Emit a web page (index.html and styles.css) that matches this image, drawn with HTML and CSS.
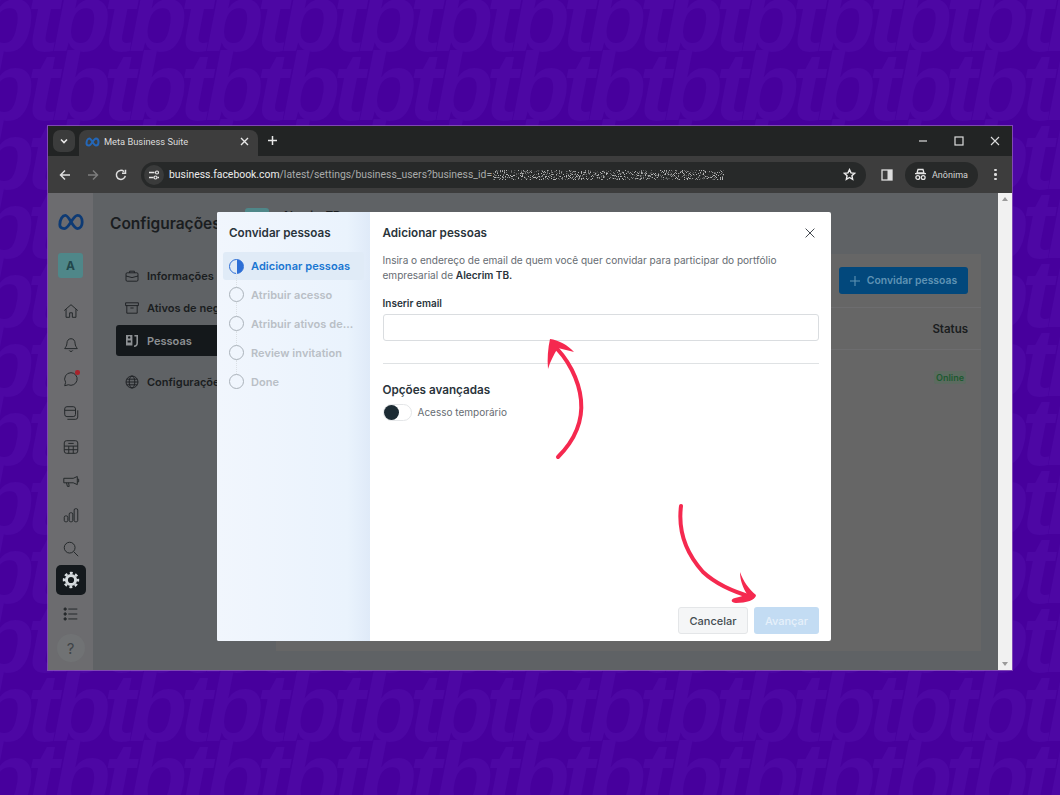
FILE: index.html
```html
<!DOCTYPE html>
<html lang="pt-BR">
<head>
<meta charset="utf-8">
<title>Meta Business Suite</title>
<link rel="stylesheet" href="styles.css">
</head>
<body>
<div class="pattern" aria-hidden="true">
  <div class="pattern-row">tbtbtbtbtbtbtbtbtbtbtbtbtbtbtb</div>
  <div class="pattern-row">tbtbtbtbtbtbtbtbtbtbtbtbtbtbtb</div>
  <div class="pattern-row">tbtbtbtbtbtbtbtbtbtbtbtbtbtbtb</div>
  <div class="pattern-row">tbtbtbtbtbtbtbtbtbtbtbtbtbtbtb</div>
  <div class="pattern-row">tbtbtbtbtbtbtbtbtbtbtbtbtbtbtb</div>
  <div class="pattern-row">tbtbtbtbtbtbtbtbtbtbtbtbtbtbtb</div>
  <div class="pattern-row">tbtbtbtbtbtbtbtbtbtbtbtbtbtbtb</div>
  <div class="pattern-row">tbtbtbtbtbtbtbtbtbtbtbtbtbtbtb</div>
  <div class="pattern-row">tbtbtbtbtbtbtbtbtbtbtbtbtbtbtb</div>
  <div class="pattern-row">tbtbtbtbtbtbtbtbtbtbtbtbtbtbtb</div>
  <div class="pattern-row">tbtbtbtbtbtbtbtbtbtbtbtbtbtbtb</div>
  <div class="pattern-row">tbtbtbtbtbtbtbtbtbtbtbtbtbtbtb</div>
</div>

<div class="window">
  <div class="tabstrip">
    <div class="tab-search"><svg width="10" height="10" viewBox="0 0 10 10"><path d="M2 3.500 5 6.500 8 3.500" fill="none" stroke="#e8e8e8" stroke-width="1.600"/></svg></div>
    <div class="tab">
      <svg class="tab-meta" width="15" height="10" viewBox="0 0 30 18"><path d="M3 12C3 6 6 2 9 2c4 0 8 14 13 14 3 0 5-3 5-7s-2-7-5-7c-5 0-9 14-14 14-3 0-5-1-5-4z" fill="none" stroke="#2467b8" stroke-width="4"/></svg>
      <span class="tab-title">Meta Business Suite</span>
      <svg class="tab-x" width="9" height="9" viewBox="0 0 9 9"><path d="M1 1 8 8M8 1 1 8" stroke="#e8e8e8" stroke-width="1.400"/></svg>
    </div>
    <svg class="newtab" width="11" height="11" viewBox="0 0 11 11"><path d="M5.500 1v9M1 5.500h9" stroke="#e8e8e8" stroke-width="1.500"/></svg>
    <div class="win-controls">
      <svg width="10" height="10" viewBox="0 0 10 10"><path d="M1 5h8" stroke="#ddd" stroke-width="1.200"/></svg>
      <svg width="10" height="10" viewBox="0 0 10 10"><rect x="1" y="1" width="8" height="8" fill="none" stroke="#ddd" stroke-width="1.200"/></svg>
      <svg width="10" height="10" viewBox="0 0 10 10"><path d="M1 1 9 9M9 1 1 9" stroke="#ddd" stroke-width="1.100"/></svg>
    </div>
  </div>
  <div class="toolbar">
    <svg class="nav" width="12" height="12" viewBox="0 0 12 12"><path d="M11 6H2M6 1.500 1.500 6 6 10.500" fill="none" stroke="#dedede" stroke-width="1.500"/></svg>
    <svg class="nav" width="12" height="12" viewBox="0 0 12 12"><path d="M1 6h9M6 1.500 10.500 6 6 10.500" fill="none" stroke="#7d7d7d" stroke-width="1.500"/></svg>
    <svg class="nav" width="12" height="12" viewBox="0 0 12 12"><path d="M10.300 6.800A4.500 4.500 0 1 1 9 2.600M10.500 .8v3.400H7" fill="none" stroke="#dedede" stroke-width="1.500"/></svg>
    <div class="omnibox">
      <div class="site-info"><svg width="12" height="10" viewBox="0 0 12 10"><path d="M1 2.500h5.500M9.500 7.500H11M1 7.500h4.500" stroke="#e6e6e6" stroke-width="1.300"/><circle cx="9" cy="2.500" r="1.500" fill="none" stroke="#e6e6e6" stroke-width="1.200"/><circle cx="7.500" cy="7.500" r="1.500" fill="none" stroke="#e6e6e6" stroke-width="1.200"/></svg></div>
      <span class="url"><span class="url-host">business.facebook.com</span>/latest/settings/business_users?business_id=</span>
      <svg class="url-noise" width="231" height="14" viewBox="0 0 231 14"><defs><filter id="speck" x="0" y="0" width="100%" height="100%"><feTurbulence type="fractalNoise" baseFrequency="0.95" numOctaves="2" seed="4"/><feColorMatrix values="0 0 0 0 .78 0 0 0 0 .78 0 0 0 0 .78 0 0 0 7 -3.800"/></filter></defs><rect x="0" y="2" width="231" height="10" filter="url(#speck)"/></svg>
      <svg class="star" width="13" height="13" viewBox="0 0 24 24"><path d="M12 3l2.800 6 6.500.8-4.800 4.500 1.300 6.500L12 17.500 6.200 20.800l1.300-6.500L2.700 9.800 9.200 9z" fill="none" stroke="#eee" stroke-width="2.600"/></svg>
    </div>
    <svg class="panel-ic" width="12" height="12" viewBox="0 0 12 12"><rect x="1" y="1" width="10" height="10" fill="none" stroke="#ddd" stroke-width="1.300"/><rect x="6.500" y="1" width="4.500" height="10" fill="#ddd"/></svg>
    <div class="incognito">
      <svg width="13" height="13" viewBox="0 0 13 13"><path d="M4 1.500h5l1 3.500H3zM1 5.600h11" fill="none" stroke="#e6e6e6" stroke-width="1.300"/><circle cx="3.800" cy="9.500" r="1.900" fill="none" stroke="#e6e6e6" stroke-width="1.300"/><circle cx="9.200" cy="9.500" r="1.900" fill="none" stroke="#e6e6e6" stroke-width="1.300"/></svg>
      <span>Anônima</span>
    </div>
    <div class="kebab"><i></i><i></i><i></i></div>
  </div>

  <div class="viewport">
    <aside class="rail">
      <svg class="rail-logo" width="28" height="18" viewBox="0 0 30 18"><path d="M3 12C3 6 6 2 9 2c4 0 8 14 13 14 3 0 5-3 5-7s-2-7-5-7c-5 0-9 14-14 14-3 0-5-1-5-4z" fill="none" stroke="#0d3a74" stroke-width="3"/></svg>
      <div class="avatar">A</div>
      <svg class="rail-ic" viewBox="0 0 20 20"><path d="M2.500 9.500 10 3l7.500 6.500M4.500 8v9h4v-5h3v5h4V8"/></svg>
      <svg class="rail-ic" viewBox="0 0 20 20"><path d="M10 3c-3 0-4.500 2.500-4.500 5 0 3-2 5-2.500 6h14c-.5-1-2.500-3-2.500-6 0-2.500-1.500-5-4.500-5zM8 16c.5 1.500 3.500 1.500 4 0"/></svg>
      <div class="rail-chat">
        <svg class="rail-ic" viewBox="0 0 20 20"><path d="M10 3a7 7 0 1 1-3 13.400L3 17.500l1-3.800A7 7 0 0 1 10 3z"/></svg>
        <span class="dot"></span>
      </div>
      <svg class="rail-ic" viewBox="0 0 20 20"><rect x="3" y="3" width="12" height="11" rx="2.500"/><path d="M3 7h12M6 17h9a2.500 2.500 0 0 0 2.500-2.500V7"/></svg>
      <svg class="rail-ic" viewBox="0 0 20 20"><rect x="2.500" y="3" width="15" height="14" rx="2.500"/><path d="M2.500 9h15M2.500 13h15M7.500 9v8M12.500 9v8M7 6h6"/></svg>
      <svg class="rail-ic" viewBox="0 0 20 20"><path d="M2 7h10.500l4.500-2v9l-4.500-2H2zM5 12l1 4h2l-.7-4"/><path d="M17 8h1.500v3H17"/></svg>
      <svg class="rail-ic" viewBox="0 0 20 20"><rect x="2.500" y="11" width="4" height="6.500" rx="1.500"/><rect x="8" y="7.500" width="4" height="10" rx="1.500"/><rect x="13.500" y="3" width="4" height="14.500" rx="1.500"/></svg>
      <svg class="rail-ic" viewBox="0 0 20 20"><circle cx="8.500" cy="8.500" r="6"/><path d="M13 13l5 5"/></svg>
      <div class="rail-gear">
        <svg width="18" height="18" viewBox="0 0 18 18"><circle cx="9" cy="9" r="4.600" fill="none" stroke="#d5dadd" stroke-width="3"/><circle cx="9" cy="9" r="7" fill="none" stroke="#d5dadd" stroke-width="2.400" stroke-dasharray="2.900 2.600" stroke-dashoffset="1.400"/></svg>
      </div>
      <svg class="rail-ic" viewBox="0 0 20 20"><path d="M7 4.500h10M7 10h10M7 15.500h10"/><circle cx="3.500" cy="4.500" r="1.300" fill="#24282b"/><circle cx="3.500" cy="10" r="1.300" fill="#24282b"/><circle cx="3.500" cy="15.500" r="1.300" fill="#24282b"/></svg>
      <div class="rail-help">?</div>
    </aside>

    <main class="page">
      <div class="settings-col">
        <h1 class="settings-title">Configurações</h1>
        <nav class="settings-nav">
          <div class="nav-row"><svg class="nav-ic" viewBox="0 0 20 20"><rect x="2.500" y="6" width="15" height="10.500" rx="1.500"/><path d="M7 6V4h6v2M2.500 10l7.500 2 7.500-2"/></svg><span>Informações</span></div>
          <div class="nav-row"><svg class="nav-ic" viewBox="0 0 20 20"><path d="M2 3.500h16v3.500H2zM3.500 7v9.500h13V7M8 10h4"/></svg><span>Ativos de negócios</span></div>
          <div class="nav-row active"><svg class="nav-ic" viewBox="0 0 20 20"><path fill="currentColor" stroke="none" fill-rule="evenodd" d="M2.500 2.500h8v13h-8zM5 5.500a1.500 1.500 0 1 0 3 0 1.500 1.500 0 0 0-3 0zM4.500 12h4V9.500h-4zM13 2.500h4.500v10c0 3-2 5-5 5v-2c2 0 3-1 3-3v-8H13z"/></svg><span>Pessoas</span></div>
          <div class="nav-row spaced"><svg class="nav-ic" viewBox="0 0 20 20"><circle cx="10" cy="10" r="7.500"/><ellipse cx="10" cy="10" rx="3.500" ry="7.500"/><path d="M2.500 10h15M3.500 6.500h13M3.500 13.500h13"/></svg><span>Configurações</span></div>
        </nav>
      </div>
      <div class="biz-chip"><span class="biz-logo"></span><span class="biz-name">Alecrim TB</span></div>
      <section class="content">
        <div class="content-head"><button class="invite-btn"><svg width="10" height="10" viewBox="0 0 10 10"><path d="M5 0v10M0 5h10" stroke="#5f93b4" stroke-width="1.100"/></svg>Convidar pessoas</button></div>
        <div class="content-cols"><span>Status</span></div>
        <div class="content-row"><span class="online">Online</span></div>
      </section>
    </main>
    <div class="scrollbar">
      <span class="sb-up"></span>
      <span class="sb-down"></span>
    </div>
    <div class="modal">
      <div class="stepper">
        <h2 class="stepper-title">Convidar pessoas</h2>
        <ol class="steps">
          <li class="step current"><span class="half"></span>Adicionar pessoas</li>
          <li class="step"><span class="ring"></span>Atribuir acesso</li>
          <li class="step"><span class="ring"></span>Atribuir ativos de...</li>
          <li class="step"><span class="ring"></span>Review invitation</li>
          <li class="step"><span class="ring"></span>Done</li>
        </ol>
      </div>
      <div class="form">
        <div class="form-head">
          <h2 class="form-title">Adicionar pessoas</h2>
          <svg width="10" height="10" viewBox="0 0 10 10"><path d="M.6.6l8.800 8.800M9.400.6.600 9.400" stroke="#444950" stroke-width="1"/></svg>
        </div>
        <p class="form-desc">Insira o endereço de email de quem você quer convidar para participar do portfólio empresarial de <b>Alecrim TB.</b></p>
        <label class="form-label">Inserir email</label>
        <div class="form-input"></div>
        <div class="form-rule"></div>
        <h3 class="adv-title">Opções avançadas</h3>
        <div class="toggle-row">
          <span class="toggle"><i></i></span>
          <span>Acesso temporário</span>
        </div>
        <div class="form-actions">
          <button class="btn-cancel">Cancelar</button>
          <button class="btn-next">Avançar</button>
        </div>
      </div>
    </div>
  </div>
</div>

<svg class="arrows" width="1060" height="795" viewBox="0 0 1060 795" aria-hidden="true">
  <path d="M558 457C574 441 583 421 581 400C579 380 568 358 552 344" fill="none" stroke="#f5294f" stroke-width="4" stroke-linecap="round"/>
  <path d="M550 339C558 340 568 345 574 352C569 351 563 349 558 348C554 354 550 362 548 369C547 359 548 348 550 339z" fill="#f5294f"/>
  <path d="M681 506C678 530 685 552 703 572C716 584 734 592 752 597" fill="none" stroke="#f5294f" stroke-width="4" stroke-linecap="round"/>
  <path d="M740 572C743 581 749 589 756 595C756 600 746 603 736 603C731 603 730 599 735 598C739 597 743 596 747 594C743 588 740 580 740 572z" fill="#f5294f"/>
</svg>
</body>
</html>
```
FILE: styles.css
```css
* { box-sizing: border-box; }
html, body { margin: 0; padding: 0; height: 100%; }
body {
  position: relative;
  width: 1060px;
  height: 795px;
  overflow: hidden;
  background: #47009d;
  font-family: "Inter", "Liberation Sans", sans-serif;
  padding: 126px 48px 125px;
}
.pattern {
  position: absolute;
  left: 0;
  top: -17px;
  width: 1060px;
  height: 829px;
  overflow: hidden;
  display: flex;
  flex-direction: column;
}
.pattern-row {
  margin-left: -49.500px;
  font: italic 700 96px/69px "Liberation Sans", sans-serif;
  letter-spacing: -7.050px;
  color: #4d07a4;
  white-space: nowrap;
  height: 69px;
  flex: none;
}

.window {
  position: relative;
  z-index: 1;
  width: 964px;
  height: 544px;
  background: #222424;
  box-shadow: 0 0 0 1px rgba(150, 100, 190, .7);
  display: flex;
  flex-direction: column;
  overflow: hidden;
}
.tabstrip {
  height: 30px;
  display: flex;
  align-items: flex-end;
  padding-left: 5px;
  position: relative;
  flex: none;
}
.tab-search {
  width: 22px;
  height: 22px;
  border-radius: 7px;
  background: #3b3c3c;
  display: flex;
  align-items: center;
  justify-content: center;
  margin-bottom: 4px;
}
.tab {
  width: 179px;
  height: 26px;
  margin-left: 4px;
  background: #3d3d3d;
  border-radius: 8px 8px 0 0;
  display: flex;
  align-items: center;
  padding: 0 9px 3px 6px;
  color: #dcdcdc;
  font: 9.300px Roboto, "Liberation Sans", sans-serif;
}
.tab-meta { margin-right: 4px; }
.tab-title { flex: 1; }
.newtab { margin: 0 0 10px 9px; }
.win-controls {
  margin-left: auto;
  display: flex;
  gap: 26px;
  padding-right: 12.500px;
  margin-bottom: 10px;
}
.toolbar {
  height: 37px;
  background: #3d3d3d;
  display: flex;
  align-items: center;
  padding: 0 0 0 11px;
  flex: none;
}
.nav { margin-right: 16px; }
.nav + .nav + .nav { margin-right: 14px; }
.omnibox {
  width: 725px;
  height: 26px;
  margin-right: 15px;
  background: #272929;
  border-radius: 13px;
  display: flex;
  align-items: center;
  padding: 0 0 0 2px;
  position: relative;
  color: #a9abab;
  font: 10.400px Roboto, "Liberation Sans", sans-serif;
}
.site-info {
  width: 20px;
  height: 20px;
  margin-left: 1px;
  border-radius: 50%;
  background: #3a3b3b;
  display: flex;
  align-items: center;
  justify-content: center;
  margin-right: 5px;
}
.url { white-space: nowrap; }
.url-host { color: #ececec; }
.url-noise { margin-left: 1px; opacity: .75; flex: none; }
.star { position: absolute; right: 10.500px; top: 6.500px; }
.panel-ic { margin-right: 12px; }
.incognito {
  width: 73px;
  height: 26px;
  background: #272929;
  border-radius: 13px;
  display: flex;
  align-items: center;
  gap: 5px;
  padding-left: 9px;
  color: #d5d5d5;
  font: 9px Roboto, "Liberation Sans", sans-serif;
}
.kebab {
  margin-left: 16px;
  display: flex;
  flex-direction: column;
  gap: 2px;
}
.kebab i {
  width: 2.500px;
  height: 2.500px;
  border-radius: 50%;
  background: #ddd;
}

.viewport {
  flex: 1;
  display: flex;
  position: relative;
  background: #5f6265;
  overflow: hidden;
}
.rail {
  width: 45px;
  flex: none;
  background: #6c6c6f;
  display: flex;
  flex-direction: column;
  align-items: center;
  padding-top: 20px;
}
.rail-logo { margin-bottom: 22px; }
.avatar {
  width: 25px;
  height: 25px;
  border-radius: 3px;
  background: #4f8789;
  color: #22474b;
  font-weight: 700;
  font-size: 12px;
  display: flex;
  align-items: center;
  justify-content: center;
  margin-bottom: 24px;
}
.rail-ic {
  width: 18px;
  height: 18px;
  margin-bottom: 16px;
  fill: none;
  stroke: #24282b;
  stroke-width: 1.100;
  display: block;
}
.rail-chat { position: relative; height: 18px; margin-bottom: 16px; }
.dot {
  position: absolute;
  right: 0;
  top: 0;
  width: 4.500px;
  height: 4.500px;
  border-radius: 50%;
  background: #a8242c;
}
.rail-gear {
  width: 30px;
  height: 30px;
  margin: -9px 0 10px;
  border-radius: 5px;
  background: #14191d;
  display: flex;
  align-items: center;
  justify-content: center;
}
.rail-help {
  width: 28px;
  height: 28px;
  margin-top: -5px;
  border-radius: 50%;
  background: #707274;
  color: #3f4447;
  font-size: 15px;
  display: flex;
  align-items: center;
  justify-content: center;
}
.page {
  flex: 1;
  display: flex;
  position: relative;
  min-width: 0;
}
.settings-col { width: 183px; flex: none; padding: 21px 0 0 17px; }
.settings-title { margin: 0; font-size: 15.500px; line-height: 19px; font-weight: 600; color: #1a1d20; white-space: nowrap; }
.settings-nav { margin-top: 27px; margin-left: 6px; }
.nav-row {
  display: flex;
  align-items: center;
  gap: 7px;
  height: 31px;
  margin-bottom: 1.500px;
  padding-left: 8px;
  font-size: 11px;
  font-weight: 600;
  color: #1a1d20;
  border-radius: 3px;
  white-space: nowrap;
  width: 180px;
}
.nav-row.active { background: #14181b; color: #8d9093; }
.nav-row.spaced { margin-top: 10px; }
.nav-ic { width: 16px; height: 16px; fill: none; stroke: currentColor; stroke-width: 1.100; flex: none; }
.biz-chip {
  position: absolute;
  left: 152px;
  top: 15px;
  display: flex;
  align-items: center;
  gap: 13px;
  font-size: 11px;
  font-weight: 600;
  line-height: 14px;
  color: #1a1d20;
  white-space: nowrap;
}
.biz-logo { width: 24px; height: 14px; border-radius: 3px; background: #4f8789; }
.content {
  width: 705px;
  margin-top: 61px;
  height: 397px;
  background: #666;
  align-self: flex-start;
}
.content-head {
  height: 53px;
  display: flex;
  justify-content: flex-end;
  align-items: center;
  padding-right: 13px;
}
.invite-btn {
  width: 129px;
  height: 27px;
  background: #02487c;
  border: 0;
  border-radius: 3px;
  color: #5f93b4;
  font: 600 10.400px "Inter", sans-serif;
  display: flex;
  align-items: center;
  justify-content: center;
  gap: 7px;
  white-space: nowrap;
}
.content-cols {
  height: 43px;
  border-top: 1px solid #6d6d6f;
  border-bottom: 1px solid #6d6d6f;
  display: flex;
  justify-content: flex-end;
  align-items: center;
  padding-right: 13px;
  font-size: 11.500px;
  font-weight: 600;
  color: #1a1d20;
}
.content-row {
  height: 54px;
  display: flex;
  justify-content: flex-end;
  align-items: center;
  padding-right: 15px;
}
.online {
  background: #5c6b60;
  color: #1c5a30;
  font-size: 9px;
  font-weight: 600;
  padding: 1px 2px;
  border-radius: 2px;
}
.scrollbar {
  width: 14px;
  flex: none;
  background: #f1f1f1;
  position: relative;
}
.sb-up, .sb-down {
  position: absolute;
  left: 3.500px;
  width: 0;
  height: 0;
  border-left: 3.500px solid transparent;
  border-right: 3.500px solid transparent;
}
.sb-up { top: 4px; border-bottom: 4px solid #9a9a9a; }
.sb-down { bottom: 4px; border-top: 4px solid #9a9a9a; }
.modal {
  position: absolute;
  left: 169px;
  top: 19px;
  width: 614px;
  height: 429px;
  background: #fff;
  border-radius: 2px;
  display: flex;
  overflow: hidden;
}
.stepper {
  width: 153px;
  flex: none;
  padding: 14px 6px 0;
  background: linear-gradient(90deg, #f1f6fd, #eaf3fd 85%, #dfeaf8);
}
.stepper-title {
  margin: 0 0 0 6px;
  font-size: 11.700px;
  font-weight: 600;
  color: #2a343b;
  line-height: 14px;
}
.steps {
  list-style: none;
  margin: 12px 0 0;
  padding: 0;
}
.step {
  position: relative;
  display: flex;
  align-items: center;
  gap: 7.500px;
  height: 29px;
  padding-left: 5.500px;
  font-size: 11px;
  letter-spacing: .05px;
  font-weight: 600;
  color: #b9bfc6;
  white-space: nowrap;
}
.step + .step::before {
  content: "";
  position: absolute;
  left: 12.500px;
  top: -7px;
  height: 14px;
  border-left: 1px dotted #dbe0e5;
}
.step.current {
  background: #e0ebf7;
  color: #1976d2;
  border-radius: 3px;
  height: 28px;
}
.ring {
  position: relative;
  z-index: 1;
  width: 15px;
  height: 15px;
  border: 1.500px solid #aab2ba;
  border-radius: 50%;
  flex: none;
}
.half {
  width: 15px;
  height: 15px;
  border: 1.500px solid #2d6fd6;
  border-radius: 50%;
  flex: none;
  background: linear-gradient(90deg, transparent 50%, #2d6fd6 50%);
}
.form {
  flex: 1;
  padding: 14px 12px 7px 12.500px;
  display: flex;
  flex-direction: column;
  min-width: 0;
}
.form-head {
  display: flex;
  justify-content: space-between;
  align-items: center;
  height: 14px;
  padding-right: 4.500px;
}
.form-title {
  margin: 0;
  font-size: 11.700px;
  font-weight: 600;
  color: #2a343b;
}
.form-desc {
  margin: 12.500px 0 0;
  font-size: 10.050px;
  line-height: 15px;
  color: #666c72;
}
.form-desc b { font-weight: 600; color: #2a343b; }
.form-label {
  margin-top: 14px;
  font-size: 10px;
  line-height: 13px;
  font-weight: 600;
  color: #2a343b;
}
.form-input {
  margin-top: 4.500px;
  height: 27px;
  flex: none;
  border: 1px solid #dadde0;
  border-radius: 3px;
  background: #fff;
}
.form-rule {
  height: 1px;
  flex: none;
  background: #dfe2e4;
  margin-top: 22px;
}
.adv-title {
  margin: 19px 0 0;
  font-size: 11.700px;
  line-height: 14px;
  font-weight: 600;
  color: #2a343b;
}
.toggle-row {
  display: flex;
  align-items: center;
  gap: 6px;
  margin-top: 6.500px;
  font-size: 10px;
  color: #666c72;
}
.toggle {
  width: 29px;
  height: 17px;
  border: 1px solid #e4e6e8;
  border-radius: 9px;
  display: block;
  position: relative;
}
.toggle i {
  position: absolute;
  left: 0;
  top: 0;
  width: 15px;
  height: 15px;
  border-radius: 50%;
  background: #1c2b33;
}
.form-actions {
  margin-top: auto;
  display: flex;
  justify-content: flex-end;
  gap: 6px;
}
.btn-cancel, .btn-next {
  height: 27px;
  border-radius: 3px;
  font: 500 11px "Inter", sans-serif;
}
.btn-cancel {
  width: 70px;
  background: #f5f6f7;
  border: 1px solid #e4e6e8;
  color: #444c52;
}
.btn-next {
  width: 65px;
  background: #c3dcf3;
  border: 0;
  color: #e6f0fa;
}
.arrows {
  position: absolute;
  left: 0;
  top: 0;
  z-index: 2;
  pointer-events: none;
}
```
